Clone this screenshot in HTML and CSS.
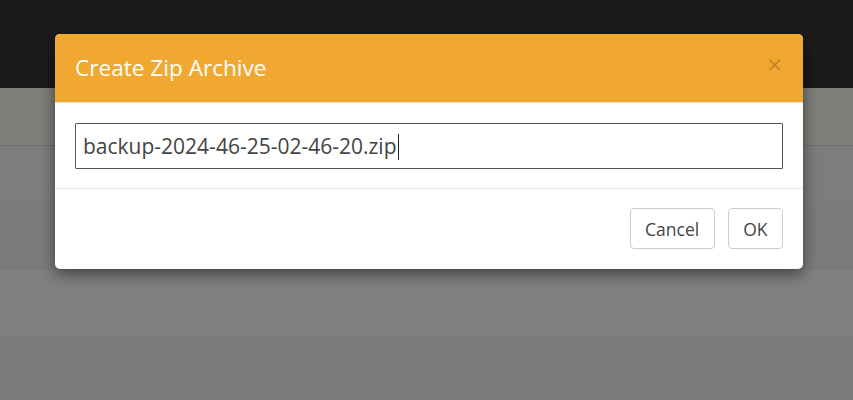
FILE: index.html
```html
<!DOCTYPE html>
<html>
<head>
<meta charset="utf-8">
<link rel="stylesheet" href="styles.css">
</head>
<body>
<div class="page">
  <div class="topbar"></div>
  <div class="toolbar"></div>
  <div class="row r1"></div>
  <div class="row r2"></div>
  <div class="row r3"></div>
  <div class="row r4"></div>
</div>
<div class="modal">
  <div class="modal-header">
    <h4 class="modal-title">Create Zip Archive</h4>
    <span class="close">×</span>
  </div>
  <div class="modal-body">
    <div class="input"><span>backup-2024-46-25-02-46-20.zip</span><span class="caret"></span></div>
  </div>
  <div class="modal-footer">
    <button class="btn">Cancel</button>
    <button class="btn">OK</button>
  </div>
</div>
</body>
</html>
```
FILE: styles.css
```css
html, body {
  margin: 0;
  padding: 0;
  width: 853px;
  height: 400px;
  overflow: hidden;
  font-family: "Open Sans", "Noto Sans", sans-serif;
}
.page {
  display: flex;
  flex-direction: column;
  height: 400px;
  background: #7c7c7c;
}
.topbar { height: 88px; background: #1b1b1b; }
.toolbar { height: 57px; background: #7e7f7a; border-bottom: 1px solid #6e6e73; }
.row { height: 66px; }
.r1 { height: 57px; background: #7d7d7d; }
.r2 { height: 67px; background: #7b7b7b; }
.r3 { height: 66px; background: #808080; }
.r4 { flex: 1; background: #7b7b7b; }

.modal {
  position: absolute;
  top: 34px;
  left: 55px;
  width: 748px;
  background: #fff;
  border-radius: 5px;
  box-shadow: 0 5px 15px rgba(0,0,0,0.5);
  overflow: hidden;
}
.modal-header {
  background: #f0a830;
  height: 69px;
  box-sizing: border-box;
  padding: 0 20px;
  display: flex;
  align-items: center;
  justify-content: space-between;
  border-bottom: 1px solid #e5e5e5;
}
.modal-title {
  margin: 0;
  color: #fff;
  font-size: 22.6px;
  font-weight: 400;
  line-height: 1.4;
  padding-bottom: 1px;
}
.close {
  color: #000;
  opacity: 0.2;
  font-size: 26px;
  font-weight: 400;
  line-height: 1;
  margin-right: 1px;
  margin-top: -9px;
}
.modal-body {
  padding: 20px 20px 19px;
  border-bottom: 1px solid #e5e5e5;
}
.input {
  height: 46px;
  box-sizing: border-box;
  border: 1px solid #555;
  border-radius: 1px;
  padding: 0 7px;
  display: flex;
  align-items: center;
  font-size: 21px;
  color: #444;
}
.caret {
  display: inline-block;
  width: 1px;
  height: 26px;
  background: #222;
  margin-left: 1px;
  margin-top: 2px;
}
.modal-footer {
  padding: 19px 20px 20px;
  display: flex;
  justify-content: flex-end;
  gap: 13px;
}
.btn {
  height: 41px;
  box-sizing: border-box;
  background: #fff;
  border: 1px solid #ccc;
  border-radius: 4px;
  padding: 0 14.5px;
  font-family: "Open Sans", "Noto Sans", sans-serif;
  font-size: 17.5px;
  color: #444;
}
```
